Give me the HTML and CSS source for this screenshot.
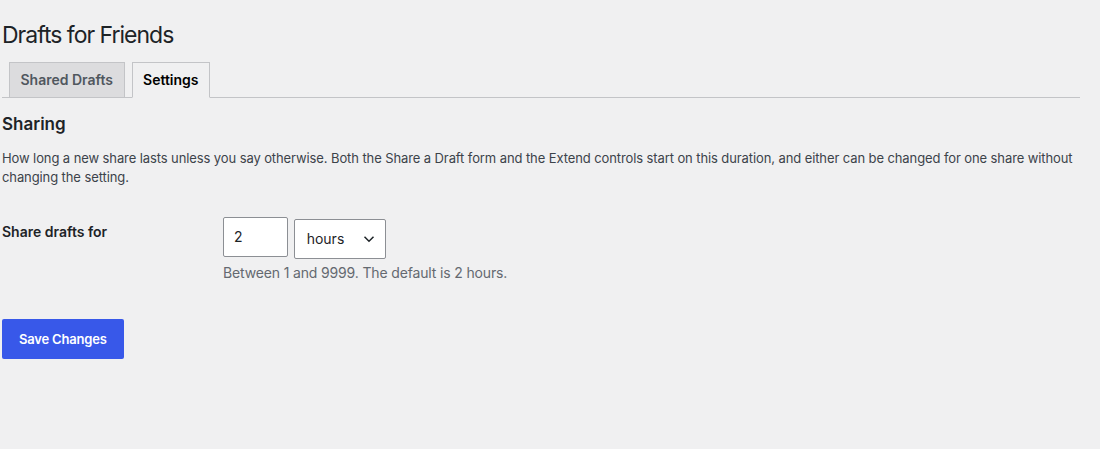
FILE: index.html
```html
<!DOCTYPE html>
<html lang="en">
<head>
    <meta charset="UTF-8">
    <meta name="viewport" content="width=device-width, initial-scale=1.0">
    <title>Drafts for Friends</title>
    <link rel="stylesheet" href="styles.css">
</head>
<body>

    <div class="wrap">
        <h1>Drafts for Friends</h1>

        <nav class="nav-tab-wrapper">
            <a href="#" class="nav-tab">Shared Drafts</a>
            <a href="#" class="nav-tab nav-tab-active">Settings</a>
        </nav>

        <form>
            <h2>Sharing</h2>
            <p class="intro">How long a new share lasts unless you say otherwise. Both the Share a Draft form and the Extend controls start on this duration, and either can be changed for one share without changing the setting.</p>

            <table class="form-table">
                <tr>
                    <th><label for="duration">Share drafts for</label></th>
                    <td>
                        <input type="number" id="duration" class="small-text" value="2" min="1" max="9999">
                        <span class="select-wrap">
                            <select id="unit">
                                <option>minutes</option>
                                <option selected>hours</option>
                                <option>days</option>
                            </select>
                            <svg class="chevron" width="12" height="8" viewBox="0 0 12 8"><path d="M1.5 1.8 6 6.2l4.5-4.4" fill="none" stroke="#1d2327" stroke-width="1.5"/></svg>
                        </span>
                        <p class="description">Between 1 and 9999. The default is 2 hours.</p>
                    </td>
                </tr>
            </table>

            <p class="submit">
                <button type="submit" class="button-primary">Save Changes</button>
            </p>
        </form>
    </div>

</body>
</html>
```

FILE: styles.css
```css
* {
    box-sizing: border-box;
}

body {
    margin: 0;
    font-family: Inter, "Noto Sans", sans-serif;
    font-size: 13px;
    line-height: 1.4;
    background-color: #f0f0f1;
    color: #1d2327;
}

.wrap {
    margin: 12px 20px 0 2px;
}

h1 {
    font-size: 23px;
    font-weight: 400;
    line-height: 1.3;
    letter-spacing: -1px;
    margin: 0;
    padding: 9px 0 4px;
}

.nav-tab-wrapper {
    display: flex;
    margin-top: 7px;
    border-bottom: 1px solid #c3c4c7;
}

.nav-tab {
    margin: 0 0 -1px 7px;
    padding: 5px 10.5px;
    border: 1px solid #c3c4c7;
    background-color: #dcdcde;
    color: #50575e;
    font-size: 14px;
    font-weight: 600;
    line-height: 24px;
    text-decoration: none;
}

.nav-tab-active {
    background-color: #f0f0f1;
    border-bottom-color: #f0f0f1;
    color: #000;
}

h2 {
    font-size: 17px;
    font-weight: 600;
    margin: 15px 0 0;
    line-height: 1.3;
}

.intro {
    margin: 14px 0 0;
    line-height: 1.5;
    letter-spacing: -0.1px;
    color: #3c434a;
}

.form-table {
    border-collapse: collapse;
    margin-top: 14px;
}

.form-table th {
    width: 211px;
    padding: 21px 10px 20px 0;
    text-align: left;
    vertical-align: top;
    font-size: 14px;
    font-weight: 600;
    line-height: 1.3;
}

.form-table td {
    padding: 15px 10px;
    vertical-align: top;
}

input.small-text {
    width: 65px;
    height: 40px;
    padding: 0 10px;
    border: 1px solid #8c8f94;
    border-radius: 2px;
    background: #fff;
    font: 14px Inter, "Noto Sans", sans-serif;
    color: #1d2327;
    -moz-appearance: textfield;
    vertical-align: top;
}

input.small-text::-webkit-inner-spin-button,
input.small-text::-webkit-outer-spin-button {
    -webkit-appearance: none;
    margin: 0;
}

.select-wrap {
    position: relative;
    display: inline-block;
    margin: 2px 0 0 2px;
    vertical-align: top;
}

select {
    -webkit-appearance: none;
    appearance: none;
    width: 92px;
    height: 40px;
    padding: 0 24px 0 12px;
    border: 1px solid #8c8f94;
    border-radius: 2px;
    background: #fff;
    font: 14px Inter, "Noto Sans", sans-serif;
    color: #1d2327;
}

.chevron {
    position: absolute;
    right: 11px;
    top: 16px;
    pointer-events: none;
}

.description {
    margin: 4px 0 0;
    font-size: 14px;
    letter-spacing: -0.15px;
    color: #646970;
}

.submit {
    margin: 21px 0 0;
}

.button-primary {
    height: 40px;
    padding: 0 17px;
    border: none;
    border-radius: 2px;
    background-color: #3858e9;
    color: #fff;
    font: 600 13px Inter, "Noto Sans", sans-serif;
    letter-spacing: -0.2px;
    cursor: pointer;
}
```
